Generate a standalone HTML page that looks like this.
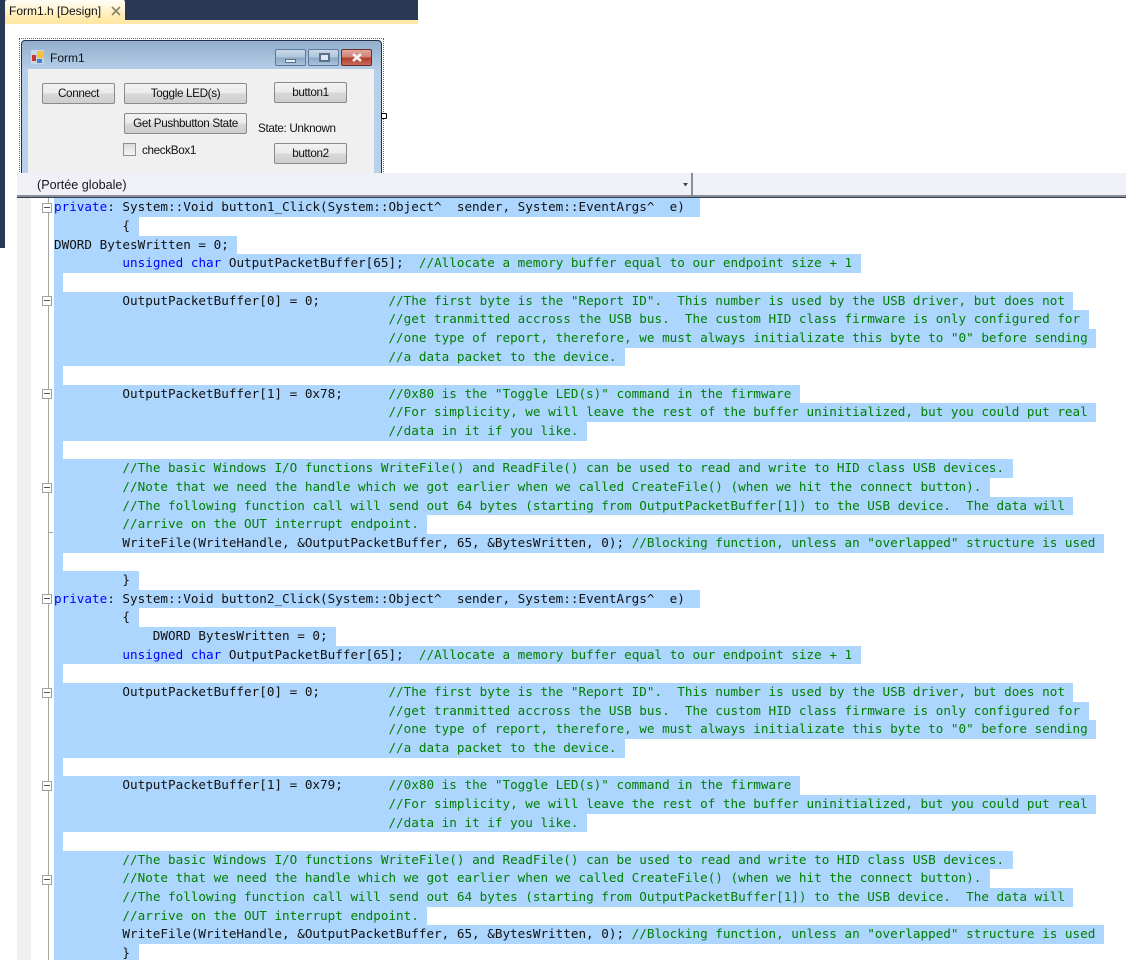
<!DOCTYPE html>
<html><head><meta charset="utf-8">
<style>
html,body{margin:0;padding:0;background:#fff;width:1126px;height:960px;overflow:hidden}
#wrap{position:relative;width:1126px;height:960px;overflow:hidden;background:#fff}
.a{position:absolute}
#code{position:absolute;left:54px;top:198.4px;font:12.64px/18.65px "DejaVu Sans Mono",monospace;color:#111;white-space:normal}
#code div{height:18.65px;white-space:pre}
#code span.s{display:inline-block;height:18.65px;background:#add6ff;padding-right:8.5px;vertical-align:top}
#code span.e{display:inline-block;height:18.65px;background:#add6ff;width:9px;vertical-align:top}
i{font-style:normal;color:#0000ff}
b{font-weight:normal;color:#008000}
.box{position:absolute;left:42px;width:8px;height:8px;border:1px solid #a0a0a0;background:#fff}
.box:after{content:"";position:absolute;left:1px;top:3px;width:6px;height:1px;background:#555}
.btn{position:absolute;box-sizing:border-box;border:1px solid #8a8a8a;border-radius:2px;background:linear-gradient(#f2f2f2 0,#ebebeb 48%,#d8d8d8 52%,#cfcfcf 100%);font:11.7px/20px "Liberation Sans",sans-serif;letter-spacing:-.35px;color:#111;text-align:center}
.t{position:absolute;font:11.7px/14px "Liberation Sans",sans-serif;letter-spacing:-.35px;color:#111;white-space:pre}
.wb{position:absolute;top:49px;height:17px;width:31px;box-sizing:border-box;border:1px solid #5f7a98;border-radius:2px;background:linear-gradient(#c8d8e8 0,#adc4da 50%,#8aa7c4 52%,#a9c3dc 100%)}
</style></head><body><div id="wrap">
<div class="a" style="left:0;top:0;width:418px;height:20px;background:#293955"></div>
<div class="a" style="left:0;top:0;width:5px;height:248px;background:#293955"></div>
<div class="a" style="left:5px;top:20px;width:413px;height:4px;background:#ffe8a6"></div>
<div class="a" style="left:5px;top:0;width:120px;height:20px;background:linear-gradient(#fffdf5,#fff3cf 50%,#ffe8a6);border-radius:2px 2px 0 0"></div>
<div class="t" style="left:9px;top:4px;font-size:12px;letter-spacing:0">Form1.h [Design]</div>
<svg class="a" style="left:110px;top:5px" width="12" height="12"><path d="M2 2L10 10M10 2L2 10" stroke="#8a7f68" stroke-width="1.6"/></svg>

<div class="a" style="left:19px;top:38px;width:365px;height:140px;border:1px dotted #666;box-sizing:border-box"></div>
<div class="a" style="left:21px;top:40px;width:361px;height:140px;box-sizing:border-box;border:1px solid #23344a;border-radius:4px 4px 0 0;background:linear-gradient(#93afcd 0,#b6cfe8 30px,#b9d1ea 100%)"></div>
<div class="a" style="left:28px;top:69px;width:346px;height:110px;background:#f0f0f0"></div>
<div class="a" style="left:31px;top:50px;width:13px;height:14px;background:#c9d6e6"></div>
<div class="a" style="left:32px;top:55px;width:4px;height:6px;background:#c8352a"></div>
<div class="a" style="left:37px;top:51px;width:7px;height:7px;background:#f3c23c"></div>
<div class="a" style="left:37px;top:59px;width:5px;height:4px;background:#4a7fd0"></div>
<div class="t" style="left:50px;top:51px;font-size:12px;letter-spacing:0">Form1</div>
<div class="wb" style="left:275px"><div class="a" style="left:9px;top:9px;width:11px;height:4px;background:#e6edf5;border:1px solid #5a6f88;box-sizing:border-box"></div></div>
<div class="wb" style="left:308px"><div class="a" style="left:10px;top:3px;width:11px;height:9px;border:2px solid #5a6f88;box-sizing:border-box;background:#dfe8f2"></div></div>
<div class="wb" style="left:341px;border-color:#6b2b26;background:linear-gradient(#e0a79c 0,#cf7f70 50%,#b13a28 52%,#c86a58 100%)"><svg class="a" style="left:9px;top:2px" width="12" height="11"><path d="M2 2L10 9M10 2L2 9" stroke="#f4f4f4" stroke-width="2.6"/></svg></div>

<div class="btn" style="left:42px;top:83px;width:73px;height:21px">Connect</div>
<div class="btn" style="left:124px;top:83px;width:123px;height:21px">Toggle LED(s)</div>
<div class="btn" style="left:274px;top:82px;width:73px;height:21px">button1</div>
<div class="btn" style="left:124px;top:113px;width:123px;height:21px">Get Pushbutton State</div>
<div class="t" style="left:258px;top:122px">State: Unknown</div>
<div class="btn" style="left:274px;top:143px;width:73px;height:21px">button2</div>
<div class="a" style="left:123px;top:143px;width:13px;height:13px;box-sizing:border-box;border:1px solid #8e8f8f;background:linear-gradient(#dcdcdc,#f4f4f4)"></div>
<div class="t" style="left:142px;top:144px">checkBox1</div>
<div class="a" style="left:381px;top:113px;width:6px;height:6px;border-radius:1px;border:1px solid #000;background:#fff;box-sizing:border-box"></div>

<div class="a" style="left:17px;top:173px;width:1109px;height:22px;background:#f0f1f6"></div>
<div class="a" style="left:17px;top:195px;width:1109px;height:2px;background:#8a8e99"></div>
<div class="a" style="left:17px;top:197px;width:1109px;height:1px;background:#2f3d55"></div>
<div class="a" style="left:691px;top:173px;width:2px;height:24px;background:#8a8e99"></div>
<div class="t" style="left:37px;top:178px;font-size:12.6px;letter-spacing:0;color:#1a1020">(Portée globale)</div>
<svg class="a" style="left:682px;top:182px" width="7" height="6"><path d="M1 1H6L3.500 4.500Z" fill="#444"/></svg>

<div class="a" style="left:17px;top:198px;width:14px;height:762px;background:#f0f0f0"></div>
<div class="a" style="left:48px;top:198px;width:1px;height:762px;background:#a5a5a5"></div>
<div class="a" style="left:48px;top:532px;width:5px;height:1px;background:#a5a5a5"></div>
<div class="box" style="top:203px"></div>
<div class="box" style="top:296px"></div>
<div class="box" style="top:389px"></div>
<div class="box" style="top:483px"></div>
<div class="box" style="top:594px"></div>
<div class="box" style="top:688px"></div>
<div class="box" style="top:781px"></div>
<div class="box" style="top:875px"></div>

<div id="code">
<div><span class="s" style="padding-right:15px"><i>private</i>: System::Void button1_Click(System::Object^  sender, System::EventArgs^  e)</span></div>
<div><span class="s">         {</span></div>
<div><span class="s">DWORD BytesWritten = 0;</span></div>
<div><span class="s">         <i>unsigned</i> <i>char</i> OutputPacketBuffer[65];  <b>//Allocate a memory buffer equal to our endpoint size + 1</b></span></div>
<div><span class="e"></span></div>
<div><span class="s">         OutputPacketBuffer[0] = 0;         <b>//The first byte is the "Report ID".  This number is used by the USB driver, but does not</b></span></div>
<div><span class="s">                                            <b>//get tranmitted accross the USB bus.  The custom HID class firmware is only configured for</b></span></div>
<div><span class="s">                                            <b>//one type of report, therefore, we must always initializate this byte to "0" before sending</b></span></div>
<div><span class="s">                                            <b>//a data packet to the device.</b></span></div>
<div><span class="e"></span></div>
<div><span class="s">         OutputPacketBuffer[1] = 0x78;      <b>//0x80 is the "Toggle LED(s)" command in the firmware</b></span></div>
<div><span class="s">                                            <b>//For simplicity, we will leave the rest of the buffer uninitialized, but you could put real</b></span></div>
<div><span class="s">                                            <b>//data in it if you like.</b></span></div>
<div><span class="e"></span></div>
<div><span class="s">         <b>//The basic Windows I/O functions WriteFile() and ReadFile() can be used to read and write to HID class USB devices.</b></span></div>
<div><span class="s">         <b>//Note that we need the handle which we got earlier when we called CreateFile() (when we hit the connect button).</b></span></div>
<div><span class="s">         <b>//The following function call will send out 64 bytes (starting from OutputPacketBuffer[1]) to the USB device.  The data will</b></span></div>
<div><span class="s">         <b>//arrive on the OUT interrupt endpoint.</b></span></div>
<div><span class="s">         WriteFile(WriteHandle, &amp;OutputPacketBuffer, 65, &amp;BytesWritten, 0); <b>//Blocking function, unless an "overlapped" structure is used</b></span></div>
<div><span class="e"></span></div>
<div><span class="s">         }</span></div>
<div><span class="s" style="padding-right:15px"><i>private</i>: System::Void button2_Click(System::Object^  sender, System::EventArgs^  e)</span></div>
<div><span class="s">         {</span></div>
<div><span class="s">             DWORD BytesWritten = 0;</span></div>
<div><span class="s">         <i>unsigned</i> <i>char</i> OutputPacketBuffer[65];  <b>//Allocate a memory buffer equal to our endpoint size + 1</b></span></div>
<div><span class="e"></span></div>
<div><span class="s">         OutputPacketBuffer[0] = 0;         <b>//The first byte is the "Report ID".  This number is used by the USB driver, but does not</b></span></div>
<div><span class="s">                                            <b>//get tranmitted accross the USB bus.  The custom HID class firmware is only configured for</b></span></div>
<div><span class="s">                                            <b>//one type of report, therefore, we must always initializate this byte to "0" before sending</b></span></div>
<div><span class="s">                                            <b>//a data packet to the device.</b></span></div>
<div><span class="e"></span></div>
<div><span class="s">         OutputPacketBuffer[1] = 0x79;      <b>//0x80 is the "Toggle LED(s)" command in the firmware</b></span></div>
<div><span class="s">                                            <b>//For simplicity, we will leave the rest of the buffer uninitialized, but you could put real</b></span></div>
<div><span class="s">                                            <b>//data in it if you like.</b></span></div>
<div><span class="e"></span></div>
<div><span class="s">         <b>//The basic Windows I/O functions WriteFile() and ReadFile() can be used to read and write to HID class USB devices.</b></span></div>
<div><span class="s">         <b>//Note that we need the handle which we got earlier when we called CreateFile() (when we hit the connect button).</b></span></div>
<div><span class="s">         <b>//The following function call will send out 64 bytes (starting from OutputPacketBuffer[1]) to the USB device.  The data will</b></span></div>
<div><span class="s">         <b>//arrive on the OUT interrupt endpoint.</b></span></div>
<div><span class="s">         WriteFile(WriteHandle, &amp;OutputPacketBuffer, 65, &amp;BytesWritten, 0); <b>//Blocking function, unless an "overlapped" structure is used</b></span></div>
<div><span class="s">         }</span></div>
</div>
</div></body></html>
